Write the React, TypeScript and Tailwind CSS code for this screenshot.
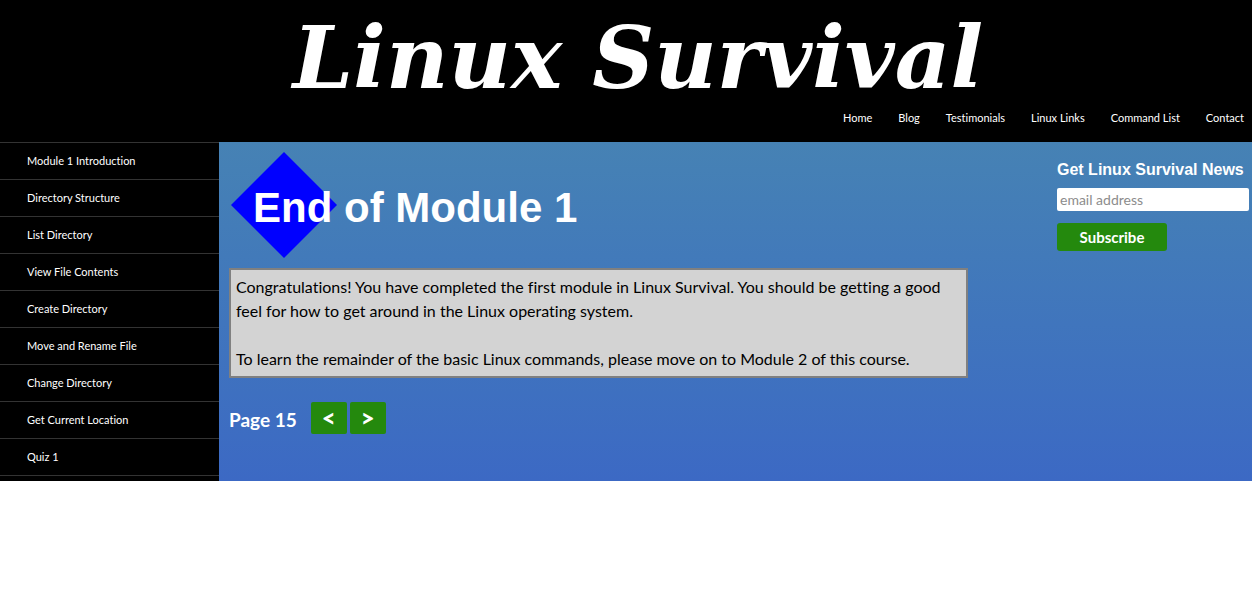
const navLinks = ['Home', 'Blog', 'Testimonials', 'Linux Links', 'Command List', 'Contact'];

const lessons = [
  'Module 1 Introduction',
  'Directory Structure',
  'List Directory',
  'View File Contents',
  'Create Directory',
  'Move and Rename File',
  'Change Directory',
  'Get Current Location',
  'Quiz 1',
];

function Header() {
  return (
    <header className="bg-black text-white">
      <p className="pt-2 pl-6 text-center font-['Lucida_Calligraphy','DejaVu_Serif',serif] text-[86px] leading-[100px] font-bold whitespace-nowrap italic">
        Linux Survival
      </p>
      <nav aria-label="Main" className="flex justify-end gap-[26px] pt-px pr-2 pb-4 text-[11px] leading-[17px]">
        {navLinks.map((label) => (
          <a key={label} href="#">
            {label}
          </a>
        ))}
      </nav>
    </header>
  );
}

function Sidebar() {
  return (
    <nav aria-label="Lessons" className="w-[219px] shrink-0 bg-black pb-1 text-[11px] text-white">
      <ul className="border-b border-[#333]">
        {lessons.map((label) => (
          <li key={label} className="border-t border-[#333]">
            <a href="#" className="block py-[9px] pl-[27px] leading-[18px]">
              {label}
            </a>
          </li>
        ))}
      </ul>
    </nav>
  );
}

function Newsletter() {
  return (
    <form className="w-48 pt-4" onSubmit={(event) => event.preventDefault()}>
      <label
        htmlFor="email"
        className="block font-['Liberation_Sans',sans-serif] text-base font-bold whitespace-nowrap text-white"
      >
        Get Linux Survival News
      </label>
      <input
        id="email"
        type="email"
        placeholder="email address"
        className="mt-[6px] block h-[23px] w-full rounded-xs bg-white px-[3px] text-sm text-black placeholder:text-[#8c8c8c]"
      />
      <button
        type="submit"
        className="mt-3 block h-7 w-[110px] rounded-[3px] bg-[#24890d] text-[15px] leading-7 font-bold text-white"
      >
        Subscribe
      </button>
    </form>
  );
}

function Lesson() {
  return (
    <main className="max-w-[739px] flex-1">
      <div className="grid grid-cols-1 items-center pt-[10px] pb-[10px]">
        <svg viewBox="0 0 106 106" className="col-start-1 row-start-1 ml-[2px] size-[106px]" aria-hidden="true">
          <path d="M53 0 106 53 53 106 0 53Z" fill="#00f" />
        </svg>
        <h1 className="col-start-1 row-start-1 pt-[6px] pl-6 font-['Liberation_Sans',sans-serif] text-[42px] leading-[50px] font-bold text-white">
          End of Module 1
        </h1>
      </div>
      <div className="border-2 border-[#808080] bg-[#d3d3d3] px-[5px] py-[5px] text-base leading-6 text-black">
        <p className="mb-6">
          Congratulations! You have completed the first module in Linux Survival. You should be getting a good feel for
          how to get around in the Linux operating system.
        </p>
        <p>To learn the remainder of the basic Linux commands, please move on to Module 2 of this course.</p>
      </div>
      <div className="flex items-center gap-[3px] pt-6 pb-[47px] font-bold text-white">
        <span className="pt-1 pr-[11px] text-[19px] leading-7">Page 15</span>
        <button type="button" aria-label="Previous page" className="h-8 w-9 rounded-xs bg-[#24890d] text-2xl leading-8 font-black">
          &lt;
        </button>
        <button type="button" aria-label="Next page" className="h-8 w-9 rounded-xs bg-[#24890d] text-2xl leading-8 font-black">
          &gt;
        </button>
      </div>
    </main>
  );
}

export default function App() {
  return (
    <div className="font-[Lato,sans-serif] [font-variant-ligatures:none]">
      <Header />
      <div className="flex">
        <Sidebar />
        <div className="flex flex-1 justify-between gap-8 bg-linear-to-b from-[#4682b4] to-[#3c69c4] pr-[3px] pl-[10px]">
          <Lesson />
          <Newsletter />
        </div>
      </div>
    </div>
  );
}
